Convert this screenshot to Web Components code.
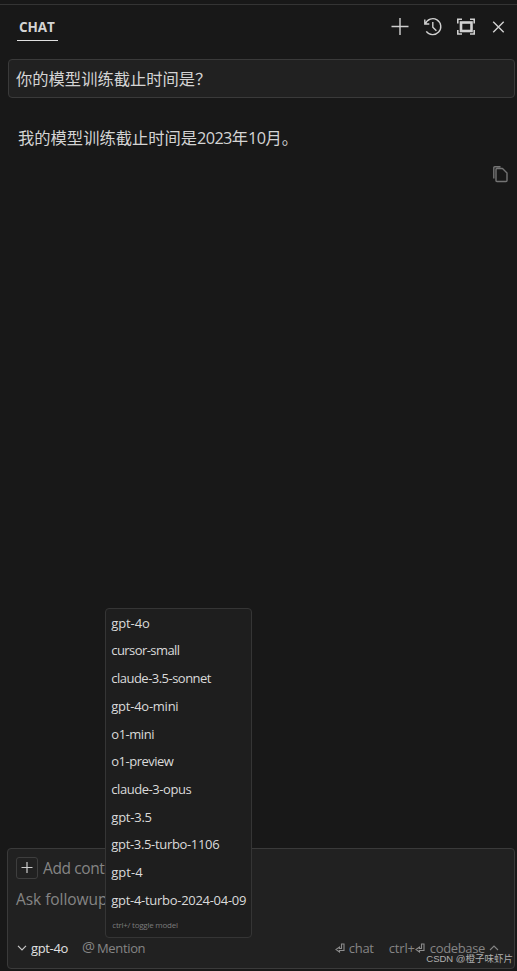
<!DOCTYPE html>
<html lang="zh-CN">
<head>
<meta charset="UTF-8">
<title>Chat</title>
<style>
  body {
    margin: 0;
    background: #181818;
    color: #d4d4d4;
    font-family: "Open Sans", "Noto Sans CJK SC", sans-serif;
    overflow: hidden;
  }
  .num { letter-spacing: -0.65px; }
</style>
</head>
<body>
<chat-panel>
  <chat-header slot="header">CHAT</chat-header>
  <user-message>你的模型训练截止时间是？</user-message>
  <bot-message>我的模型训练截止时间是<span class="num">2023</span>年<span class="num">10</span>月。</bot-message>
  <chat-composer slot="composer">
    <model-menu slot="menu" hint="ctrl+/ toggle model">
      <model-option style="letter-spacing: -0.12px">gpt-4o</model-option>
      <model-option style="letter-spacing: -0.57px">cursor-small</model-option>
      <model-option style="letter-spacing: -0.52px">claude-3.5-sonnet</model-option>
      <model-option style="letter-spacing: -0.25px">gpt-4o-mini</model-option>
      <model-option style="letter-spacing: -0.48px">o1-mini</model-option>
      <model-option style="letter-spacing: -0.51px">o1-preview</model-option>
      <model-option style="letter-spacing: -0.44px">claude-3-opus</model-option>
      <model-option style="letter-spacing: -0.23px">gpt-3.5</model-option>
      <model-option style="letter-spacing: -0.33px">gpt-3.5-turbo-1106</model-option>
      <model-option style="letter-spacing: 0">gpt-4</model-option>
      <model-option style="letter-spacing: -0.29px">gpt-4-turbo-2024-04-09</model-option>
    </model-menu>
  </chat-composer>
</chat-panel>

<script>
class ChatPanel extends HTMLElement {
  connectedCallback() {
    this.attachShadow({ mode: "open" });
    this.shadowRoot.innerHTML = `
      <style>
        :host {
          display: flex;
          flex-direction: column;
          box-sizing: border-box;
          width: 517px;
          height: 971px;
          padding: 4px 2px 2px 7px;
          background: linear-gradient(#343434, #343434) 0 4px / 100% 1px no-repeat #181818;
        }
        main { flex: 1; }
      </style>
      <slot name="header"></slot>
      <main><slot></slot></main>
      <slot name="composer"></slot>
    `;
  }
}

class ChatHeader extends HTMLElement {
  connectedCallback() {
    this.attachShadow({ mode: "open" });
    this.shadowRoot.innerHTML = `
      <style>
        :host {
          display: flex;
          justify-content: space-between;
          height: 55px;
        }
        .tab {
          box-sizing: border-box;
          width: 41px;
          height: 37px;
          margin-left: 10px;
          padding: 13px 0 0 2px;
          border-bottom: 1px solid #e0e0e0;
          font-size: 13.5px;
          line-height: 20px;
          font-weight: 700;
          letter-spacing: -0.1px;
          white-space: nowrap;
        }
        .actions {
          display: flex;
          gap: 13px;
          margin: 13px 6px 0 0;
        }
        svg {
          width: 20px;
          height: 20px;
          fill: none;
          stroke: #d0d0d0;
          stroke-width: 1.4;
        }
      </style>
      <div class="tab"><slot></slot></div>
      <div class="actions">
        <svg viewBox="0 0 20 20"><path d="M1.5 9.5h17M10 1v17"/></svg>
        <svg viewBox="0 0 20 20"><path d="M1.800 2.500v4.500h4.500M2.300 6.800A8 8 0 1 1 3.300 14.300M9.800 5v5.200l3.600 3.600"/></svg>
        <svg viewBox="0 0 20 20">
          <path stroke-width="1.600" d="M1.800 6.500V2.300h4.200M14 2.300h4.200V6.500M18.200 13v4H14M6 17H1.800v-4"/>
          <rect x="5" y="5.500" width="10.500" height="8.500" stroke-width="2.600"/>
        </svg>
        <svg viewBox="0 0 20 20"><path d="M4.200 4.800l10.500 10.500M14.700 4.800L4.200 15.300"/></svg>
      </div>
    `;
  }
}

class UserMessage extends HTMLElement {
  connectedCallback() {
    this.attachShadow({ mode: "open" });
    this.shadowRoot.innerHTML = `
      <style>
        :host {
          display: block;
          box-sizing: border-box;
          height: 39px;
          margin-left: 1px;
          padding: 7px 7px;
          border: 1px solid #3a3a3a;
          border-radius: 4px;
          background: #212121;
          font-size: 16.3px;
          line-height: 24px;
        }
      </style>
      <slot></slot>
    `;
  }
}

class BotMessage extends HTMLElement {
  connectedCallback() {
    this.attachShadow({ mode: "open" });
    this.shadowRoot.innerHTML = `
      <style>
        :host {
          display: flex;
          flex-direction: column;
          padding: 28px 6px 0 11px;
          font-size: 16.3px;
          line-height: 24px;
        }
        svg {
          align-self: flex-end;
          width: 17px;
          height: 17px;
          margin-top: 16px;
          fill: none;
          stroke: #747474;
          stroke-width: 1.4;
          stroke-linejoin: round;
        }
      </style>
      <div><slot></slot></div>
      <svg viewBox="0 0 17 17"><path d="M5.500 2.500H10.500l4.500 4.500v7.500q0 1-1 1H5q-1 0-1-1V3.500q0-1 1-1zM1.800 12.500V1.800q0-1 1-1H8.500"/></svg>
    `;
  }
}

class ModelOption extends HTMLElement {
  connectedCallback() {
    this.attachShadow({ mode: "open" });
    this.shadowRoot.innerHTML = `
      <style>
        :host {
          display: block;
          height: 27.72px;
          line-height: 27.72px;
        }
      </style>
      <slot></slot>
    `;
  }
}

class ModelMenu extends HTMLElement {
  connectedCallback() {
    this.attachShadow({ mode: "open" });
    this.shadowRoot.innerHTML = `
      <style>
        :host {
          display: block;
          box-sizing: border-box;
          width: 147px;
          height: 330px;
          padding: 0.7px 0 0 5.3px;
          border: 1px solid #353535;
          border-radius: 4px;
          background: #1e1e1e;
          color: #dadada;
          font-size: 13px;
          white-space: nowrap;
        }
        .hint {
          padding: 3px 0 0 1px;
          color: #7c7c7c;
          font-size: 8px;
          line-height: 14px;
          letter-spacing: -0.25px;
        }
      </style>
      <slot></slot>
      <div class="hint">${this.getAttribute("hint")}</div>
    `;
  }
}

class ChatComposer extends HTMLElement {
  connectedCallback() {
    this.attachShadow({ mode: "open" });
    this.shadowRoot.innerHTML = `
      <style>
        :host {
          display: flex;
          flex-direction: column;
          position: relative;
          box-sizing: border-box;
          height: 121px;
          padding: 8px 15px 0 8px;
          border: 1px solid #3a3a3a;
          border-radius: 4px;
          background: #212121;
          color: #858585;
          font-size: 15.5px;
          white-space: nowrap;
        }
        svg { fill: none; flex: none; }
        .context {
          display: flex;
          align-items: center;
          height: 22px;
          gap: 5px;
          letter-spacing: -0.4px;
        }
        .add {
          display: grid;
          place-items: center;
          box-sizing: border-box;
          width: 22px;
          height: 22px;
          border: 1px solid #3e3e3e;
          border-radius: 3px;
        }
        .prompt {
          margin-top: 8px;
          line-height: 24px;
          letter-spacing: -0.05px;
        }
        .bar {
          display: flex;
          align-items: center;
          height: 20px;
          margin-top: 27px;
          font-size: 13px;
          line-height: 20px;
          letter-spacing: -0.35px;
        }
        .down { margin: 0 4px 0 1px; }
        .model {
          width: 37px;
          margin-right: 14px;
          color: #e0e0e0;
        }
        .at { width: 15px; font-size: 14.5px; margin-top: -2px; }
        .send { margin: 0 15px 0 auto; }
        .send, .code {
          display: flex;
          align-items: center;
          gap: 4px;
        }
        .chat { letter-spacing: -0.3px; }
        .ctrl { letter-spacing: -0.15px; }
        .base { margin-left: 1px; }
        .plus { display: flex; align-items: center; }
        .return { width: 10px; height: 10px; stroke: #8c8c8c; stroke-width: 1.1; }
        /* floats over the composer and the messages */
        ::slotted(model-menu) {
          position: absolute;
          left: 97px;
          bottom: 30px;
        }
        .mark {
          position: absolute;
          right: 1px;
          bottom: 2px;
          color: #b0b0b0;
          font: 9.5px/14px "Liberation Sans", "Noto Sans CJK SC", sans-serif;
        }
      </style>
      <div class="context">
        <span class="add"><svg width="12" height="12" stroke="#ccc" stroke-width="1.2"><path d="M.5 5.500h11M6 0v11"/></svg></span>
        <span class="label">Add context</span>
      </div>
      <div class="prompt">Ask followup</div>
      <div class="bar">
        <svg class="down" width="10" height="6" stroke="#c8c8c8" stroke-width="1.2"><path d="M1 .8l4 4 4-4"/></svg>
        <span class="model">gpt-4o</span>
        <span class="at">@</span><span class="mention">Mention</span>
        <span class="send">
          <svg class="return" viewBox="0 0 10 10"><path d="M6.500 1H9v6.500H4.500V9L1 6.500 4.500 4v1.500h2z"/></svg><span class="chat">chat</span>
        </span>
        <span class="code">
          <span class="plus"><span class="ctrl">ctrl+</span><svg class="return" viewBox="0 0 10 10"><path d="M6.500 1H9v6.500H4.500V9L1 6.500 4.500 4v1.500h2z"/></svg></span>
          <span class="base">codebase</span>
          <svg width="10" height="6" stroke="#858585" stroke-width="1.1"><path d="M1 5l4-4 4 4"/></svg>
        </span>
      </div>
      <slot name="menu"></slot>
      <span class="mark">CSDN @橙子味虾片</span>
    `;
  }
}

customElements.define("chat-panel", ChatPanel);
customElements.define("chat-header", ChatHeader);
customElements.define("user-message", UserMessage);
customElements.define("bot-message", BotMessage);
customElements.define("model-option", ModelOption);
customElements.define("model-menu", ModelMenu);
customElements.define("chat-composer", ChatComposer);
</script>
</body>
</html>
